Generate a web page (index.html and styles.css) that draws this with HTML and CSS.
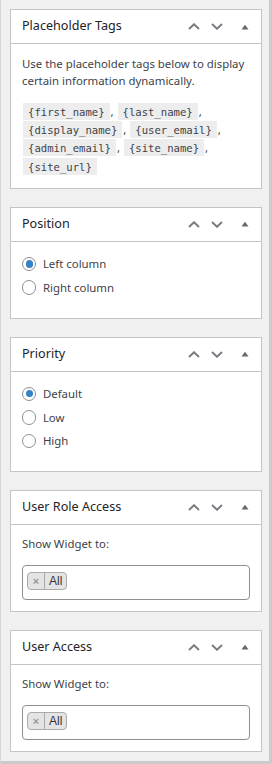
FILE: index.html
```html
<!DOCTYPE html>
<html lang="en">
<head>
<meta charset="utf-8">
<title>Widget settings</title>
<link rel="stylesheet" href="styles.css">
</head>
<body>
<div class="sidebar">

  <div class="postbox">
    <div class="postbox-header">
      <h2 class="hndle">Placeholder Tags</h2>
      <div class="handle-actions">
        <button class="handle-btn order" aria-label="Move up"><svg width="12" height="7" viewBox="0 0 12 7"><polyline points="1,6 6,1.2 11,6" /></svg></button>
        <button class="handle-btn order" aria-label="Move down"><svg width="12" height="7" viewBox="0 0 12 7"><polyline points="1,1 6,5.8 11,1" /></svg></button>
        <button class="handle-btn toggle" aria-label="Toggle panel"><svg width="8" height="6" viewBox="0 0 8 6"><polygon points="0.5,5.5 4,0.8 7.5,5.5" /></svg></button>
      </div>
    </div>
    <div class="inside">
      <p class="desc">Use the placeholder tags below to display certain information dynamically.</p>
      <p class="tags"><code>{first_name}</code>, <code>{last_name}</code>, <code>{display_name}</code>, <code>{user_email}</code>, <code>{admin_email}</code>, <code>{site_name}</code>, <code>{site_url}</code></p>
    </div>
  </div>

  <div class="postbox">
    <div class="postbox-header">
      <h2 class="hndle">Position</h2>
      <div class="handle-actions">
        <button class="handle-btn order" aria-label="Move up"><svg width="12" height="7" viewBox="0 0 12 7"><polyline points="1,6 6,1.2 11,6" /></svg></button>
        <button class="handle-btn order" aria-label="Move down"><svg width="12" height="7" viewBox="0 0 12 7"><polyline points="1,1 6,5.8 11,1" /></svg></button>
        <button class="handle-btn toggle" aria-label="Toggle panel"><svg width="8" height="6" viewBox="0 0 8 6"><polygon points="0.5,5.5 4,0.8 7.5,5.5" /></svg></button>
      </div>
    </div>
    <div class="inside radios">
      <label class="radio-row"><input type="radio" name="position" checked><span>Left column</span></label>
      <label class="radio-row"><input type="radio" name="position"><span>Right column</span></label>
    </div>
  </div>

  <div class="postbox">
    <div class="postbox-header">
      <h2 class="hndle">Priority</h2>
      <div class="handle-actions">
        <button class="handle-btn order" aria-label="Move up"><svg width="12" height="7" viewBox="0 0 12 7"><polyline points="1,6 6,1.2 11,6" /></svg></button>
        <button class="handle-btn order" aria-label="Move down"><svg width="12" height="7" viewBox="0 0 12 7"><polyline points="1,1 6,5.8 11,1" /></svg></button>
        <button class="handle-btn toggle" aria-label="Toggle panel"><svg width="8" height="6" viewBox="0 0 8 6"><polygon points="0.5,5.5 4,0.8 7.5,5.5" /></svg></button>
      </div>
    </div>
    <div class="inside radios">
      <label class="radio-row"><input type="radio" name="priority" checked><span>Default</span></label>
      <label class="radio-row"><input type="radio" name="priority"><span>Low</span></label>
      <label class="radio-row"><input type="radio" name="priority"><span>High</span></label>
    </div>
  </div>

  <div class="postbox">
    <div class="postbox-header">
      <h2 class="hndle">User Role Access</h2>
      <div class="handle-actions">
        <button class="handle-btn order" aria-label="Move up"><svg width="12" height="7" viewBox="0 0 12 7"><polyline points="1,6 6,1.2 11,6" /></svg></button>
        <button class="handle-btn order" aria-label="Move down"><svg width="12" height="7" viewBox="0 0 12 7"><polyline points="1,1 6,5.8 11,1" /></svg></button>
        <button class="handle-btn toggle" aria-label="Toggle panel"><svg width="8" height="6" viewBox="0 0 8 6"><polygon points="0.5,5.5 4,0.8 7.5,5.5" /></svg></button>
      </div>
    </div>
    <div class="inside access">
      <p class="field-label">Show Widget to:</p>
      <div class="multiselect">
        <span class="chip"><span class="chip-remove">×</span><span class="chip-text">All</span></span>
      </div>
    </div>
  </div>

  <div class="postbox">
    <div class="postbox-header">
      <h2 class="hndle">User Access</h2>
      <div class="handle-actions">
        <button class="handle-btn order" aria-label="Move up"><svg width="12" height="7" viewBox="0 0 12 7"><polyline points="1,6 6,1.2 11,6" /></svg></button>
        <button class="handle-btn order" aria-label="Move down"><svg width="12" height="7" viewBox="0 0 12 7"><polyline points="1,1 6,5.8 11,1" /></svg></button>
        <button class="handle-btn toggle" aria-label="Toggle panel"><svg width="8" height="6" viewBox="0 0 8 6"><polygon points="0.5,5.5 4,0.8 7.5,5.5" /></svg></button>
      </div>
    </div>
    <div class="inside access">
      <p class="field-label">Show Widget to:</p>
      <div class="multiselect">
        <span class="chip"><span class="chip-remove">×</span><span class="chip-text">All</span></span>
      </div>
    </div>
  </div>

</div>
</body>
</html>
```
FILE: styles.css
```css
* { box-sizing: border-box; }

html, body {
  margin: 0;
  padding: 0;
  background: #f0f0f1;
}

body {
  font-family: "Noto Sans", "Open Sans", sans-serif;
  font-size: 11.4px;
  color: #3c434a;
}

.sidebar {
  width: 272px;
  height: 764px;
  border-left: 1px solid #d6d6d7;
  border-right: 3px solid #cbcbcc;
  border-bottom: 3px solid #cbcbcc;
  padding: 9px 7px 0 9px;
  display: flex;
  flex-direction: column;
  gap: 18px;
}

.postbox {
  background: #fff;
  border: 1px solid #c3c4c7;
}

.postbox-header {
  height: 34px;
  border-bottom: 1px solid #c3c4c7;
  display: flex;
  align-items: center;
}

.hndle {
  flex: 1;
  margin: 0;
  padding: 0 0 1px 11px;
  font-size: 12.6px;
  font-weight: 400;
  color: #1d2327;
  line-height: 18px;
}

.handle-actions {
  display: flex;
  height: 100%;
}

.handle-btn {
  border: 0;
  background: none;
  padding: 0;
  margin: 0;
  height: 100%;
  display: flex;
  align-items: center;
  justify-content: center;
}

.handle-btn.order { width: 23.4px; }
.handle-btn.toggle { width: 32.4px; }

.handle-btn polyline {
  fill: none;
  stroke: #787c82;
  stroke-width: 1.9;
}

.handle-btn polygon {
  fill: #646970;
}

.inside {
  padding: 11px 12px 12px 11px;
}

.inside p { margin: 0; }

.desc {
  line-height: 17px;
}

.tags {
  margin-top: 14px !important;
  line-height: 18.2px;
}

code {
  font-family: "DejaVu Sans Mono", "Liberation Mono", monospace;
  font-size: 10.6px;
  color: #3c434a;
  background: rgba(0, 0, 0, 0.07);
  padding: 3px 5px 2px;
  margin: 0 1px;
}

.radios {
  padding: 10.5px 12px 18.25px 11px;
  display: flex;
  flex-direction: column;
}

.radio-row {
  height: 23.5px;
  display: flex;
  align-items: center;
  gap: 6.5px;
  line-height: 1;
}

.radio-row input {
  appearance: none;
  -webkit-appearance: none;
  margin: 0;
  width: 14.4px;
  height: 14.4px;
  border: 1px solid #8c8f94;
  border-radius: 50%;
  background: #fff;
  display: grid;
  place-items: center;
}

.radio-row input:checked::before {
  content: "";
  width: 7.2px;
  height: 7.2px;
  border-radius: 50%;
  background: #3582c4;
}

.access {
  padding: 10px 11px 11px;
}

.field-label {
  line-height: 17px;
  margin-bottom: 13px !important;
}

.multiselect {
  height: 35px;
  border: 1px solid #8c8f94;
  border-radius: 4px;
  padding: 6px 4px;
  display: flex;
  align-items: flex-start;
}

.chip {
  display: inline-flex;
  height: 18px;
  border: 1px solid #aaa;
  border-radius: 4px;
  background: #e4e4e4;
  font-family: "Liberation Sans", Arial, sans-serif;
  font-size: 12px;
  color: #333;
  overflow: hidden;
}

.chip-remove {
  width: 17px;
  border-right: 1px solid #aaa;
  color: #999;
  font-size: 11px;
  font-weight: bold;
  display: flex;
  align-items: center;
  justify-content: center;
}

.chip-text {
  padding: 0 4px 0 4px;
  display: flex;
  align-items: center;
}
```
